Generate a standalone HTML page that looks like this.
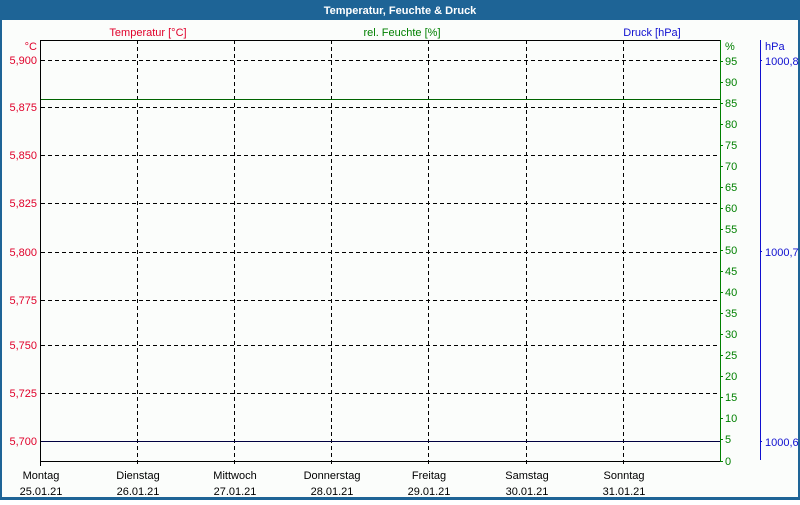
<!DOCTYPE html>
<html><head><style>
body{margin:0;width:800px;height:500px;overflow:hidden;background:#fff;font-family:"Liberation Sans",sans-serif}
</style></head><body>
<svg width="800" height="500" xmlns="http://www.w3.org/2000/svg" font-family="Liberation Sans, sans-serif" font-size="11">
<rect x="0" y="0" width="800" height="500" fill="#1e6496"/>
<rect x="2" y="20" width="796" height="477" fill="#fbfdfb"/>
<text x="400" y="14" fill="#fff" font-weight="bold" text-anchor="middle">Temperatur, Feuchte &amp; Druck</text>
<text x="148" y="36" fill="#e0002a" text-anchor="middle">Temperatur [°C]</text>
<text x="402" y="36" fill="#008000" text-anchor="middle">rel. Feuchte [%]</text>
<text x="652" y="36" fill="#1010d0" text-anchor="middle">Druck [hPa]</text>
<g stroke="#000" stroke-dasharray="4,3" stroke-width="1">
<line x1="41" y1="60.5" x2="720" y2="60.5"/>
<line x1="41" y1="107.5" x2="720" y2="107.5"/>
<line x1="41" y1="155.5" x2="720" y2="155.5"/>
<line x1="41" y1="203.5" x2="720" y2="203.5"/>
<line x1="41" y1="252.5" x2="720" y2="252.5"/>
<line x1="41" y1="300.5" x2="720" y2="300.5"/>
<line x1="41" y1="345.5" x2="720" y2="345.5"/>
<line x1="41" y1="393.5" x2="720" y2="393.5"/>
<line x1="41" y1="441.5" x2="720" y2="441.5"/>
<line x1="137.5" y1="40" x2="137.5" y2="465"/>
<line x1="234.5" y1="40" x2="234.5" y2="465"/>
<line x1="331.5" y1="40" x2="331.5" y2="465"/>
<line x1="428.5" y1="40" x2="428.5" y2="465"/>
<line x1="526.5" y1="40" x2="526.5" y2="465"/>
<line x1="623.5" y1="40" x2="623.5" y2="465"/>
</g>
<line x1="41" y1="441.5" x2="720" y2="441.5" stroke="#000040" stroke-width="1"/>
<line x1="41" y1="99.5" x2="720" y2="99.5" stroke="#006400" stroke-width="1"/>
<line x1="41" y1="40.5" x2="720" y2="40.5" stroke="#000"/>
<line x1="41" y1="461.5" x2="720" y2="461.5" stroke="#000"/>
<line x1="40.5" y1="40" x2="40.5" y2="466" stroke="#000"/>
<line x1="720.5" y1="40" x2="720.5" y2="462" stroke="#008000"/>
<line x1="760.5" y1="40" x2="760.5" y2="460" stroke="#1010d0"/>
<g fill="#e0002a" text-anchor="end">
<text x="37" y="50">°C</text>
<text x="37" y="64">5,900</text>
<text x="37" y="111">5,875</text>
<text x="37" y="159">5,850</text>
<text x="37" y="207">5,825</text>
<text x="37" y="256">5,800</text>
<text x="37" y="304">5,775</text>
<text x="37" y="349">5,750</text>
<text x="37" y="397">5,725</text>
<text x="37" y="445">5,700</text>
</g>
<g fill="#008000" stroke="none">
<text x="725" y="50">%</text>
<text x="725" y="65">95</text><text x="725" y="86">90</text><text x="725" y="107">85</text><text x="725" y="128">80</text>
<text x="725" y="149">75</text><text x="725" y="170">70</text><text x="725" y="191">65</text><text x="725" y="212">60</text>
<text x="725" y="233">55</text><text x="725" y="254">50</text><text x="725" y="275">45</text><text x="725" y="296">40</text>
<text x="725" y="317">35</text><text x="725" y="338">30</text><text x="725" y="359">25</text><text x="725" y="380">20</text>
<text x="725" y="401">15</text><text x="725" y="422">10</text><text x="725" y="443">5</text><text x="725" y="465">0</text>
</g>
<g stroke="#008000">
<path d="M720 61.5h3M720 82.5h3M720 103.5h3M720 124.5h3M720 145.5h3M720 166.5h3M720 187.5h3M720 208.5h3M720 229.5h3M720 250.5h3M720 271.5h3M720 292.5h3M720 313.5h3M720 334.5h3M720 355.5h3M720 376.5h3M720 397.5h3M720 418.5h3M720 439.5h3M720 461.5h3"/>
</g>
<g stroke="#1010d0"><path d="M760 60.5h2M760 251.5h2M760 441.5h2"/></g>
<g fill="#1010d0">
<text x="765" y="50">hPa</text>
<text x="765" y="65">1000,8</text>
<text x="765" y="256">1000,7</text>
<text x="765" y="446">1000,6</text>
</g>
<g fill="#000" text-anchor="middle">
<text x="41" y="479">Montag</text><text x="41" y="495">25.01.21</text>
<text x="138" y="479">Dienstag</text><text x="138" y="495">26.01.21</text>
<text x="235" y="479">Mittwoch</text><text x="235" y="495">27.01.21</text>
<text x="332" y="479">Donnerstag</text><text x="332" y="495">28.01.21</text>
<text x="429" y="479">Freitag</text><text x="429" y="495">29.01.21</text>
<text x="527" y="479">Samstag</text><text x="527" y="495">30.01.21</text>
<text x="624" y="479">Sonntag</text><text x="624" y="495">31.01.21</text>
</g>
</svg>
</body></html>
